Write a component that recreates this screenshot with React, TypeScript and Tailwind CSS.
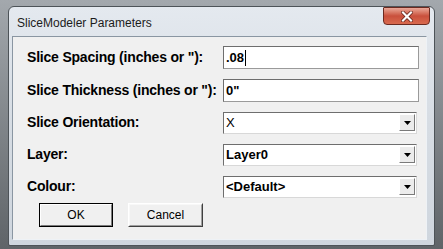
import React from 'react';

const labelCls = "w-[210px] pl-[14px] text-[14px] font-bold tracking-[-0.2px] text-black whitespace-nowrap";

const TextBox: React.FC<{ value: string; caret?: boolean }> = ({ value, caret }) => (
  <div className="w-[196px] h-[23px] bg-white border border-t-[#6e6e6e] border-l-[#6e6e6e] border-r-[#9a9a9a] border-b-[#9a9a9a] flex items-center pl-[2px]">
    <span className="text-[13px] font-bold text-black leading-none">{value}</span>
    {caret && <span className="ml-[1px] w-px h-[16px] bg-black" />}
  </div>
);

const Select: React.FC<{ value: string; bold?: boolean }> = ({ value, bold = true }) => (
  <div className="w-[194px] h-[22px] bg-white border border-t-[#6e6e6e] border-l-[#6e6e6e] border-r-[#d8d8d8] border-b-[#d8d8d8] flex items-center pl-[2px] pr-[1px]">
    <span className={`flex-1 text-[13px] text-black leading-none ${bold ? 'font-bold' : 'font-normal'}`}>{value}</span>
    <div className="w-[16px] h-[17px] bg-[#ececec] border border-t-white border-l-white border-r-[#7a7a7a] border-b-[#7a7a7a] flex items-center justify-center">
      <svg width="7" height="4" viewBox="0 0 7 4"><path d="M0 0h7L3.5 4z" fill="#000" /></svg>
    </div>
  </div>
);

export default function App() {
  return (
    <div className="w-[443px] h-[249px] bg-gradient-to-b from-[#a3a8ad] to-[#5f6468] pl-[8px] pt-[6px] overflow-hidden" style={{ fontFamily: '"Liberation Sans", Arial, sans-serif' }}>
      <div className="w-[427px] h-[240px] rounded-t-[6px] rounded-b-[2px] border border-[#4d5358] bg-gradient-to-b from-[#e4e9ef] via-[#d6dce3] to-[#cfd6de] flex flex-col">
        <div className="h-[29px] flex items-start justify-between pl-[8px] pr-[4px]">
          <span className="mt-[7px] text-[12px] text-[#1b1b1b]">SliceModeler Parameters</span>
          <div className="w-[47px] h-[18px] rounded-b-[4px] rounded-t-[1px] border border-[#6b2a20] bg-gradient-to-b from-[#e9a898] via-[#c9503c] to-[#d96a4f] flex items-center justify-center">
            <svg width="12" height="11" viewBox="0 0 12 11">
              <path d="M2 1.5l8 8M10 1.5l-8 8" stroke="#5a1a10" strokeWidth="3.6" strokeLinecap="square" />
              <path d="M2 1.5l8 8M10 1.5l-8 8" stroke="#ffffff" strokeWidth="2.2" strokeLinecap="square" />
            </svg>
          </div>
        </div>
        <div className="ml-[3px] mr-[7px] h-[204px] bg-[#f0f0f0] border border-t-[#8a96a2] border-l-[#8a96a2] border-r-[#eef2f6] border-b-[#eef2f6] flex flex-col">
          <div className="mt-[9px] h-[23px] flex items-center">
            <span className={labelCls}>Slice Spacing (inches or "):</span>
            <TextBox value=".08" caret />
          </div>
          <div className="mt-[9px] h-[24px] flex items-center">
            <span className={labelCls}>Slice Thickness (inches or "):</span>
            <TextBox value={'0"'} />
          </div>
          <div className="mt-[9px] h-[23px] flex items-center">
            <span className={labelCls}>Slice Orientation:</span>
            <Select value="X" bold={false} />
          </div>
          <div className="mt-[9px] h-[23px] flex items-center">
            <span className={labelCls}>Layer:</span>
            <Select value="Layer0" />
          </div>
          <div className="mt-[9px] h-[23px] flex items-center">
            <span className={labelCls}>Colour:</span>
            <Select value="<Default>" />
          </div>
          <div className="mt-[5px] pl-[26px] flex gap-[15px]">
            <button className="w-[74px] h-[24px] border border-black bg-[#f0f0f0] p-0">
              <div className="w-full h-full border border-t-white border-l-white border-r-[#7a7a7a] border-b-[#7a7a7a] flex items-center justify-center text-[12px] text-black">OK</div>
            </button>
            <button className="w-[75px] h-[24px] border border-t-white border-l-white border-r-[#404040] border-b-[#404040] bg-[#f0f0f0] p-0">
              <div className="w-full h-full border border-t-[#f8f8f8] border-l-[#f8f8f8] border-r-[#a0a0a0] border-b-[#a0a0a0] flex items-center justify-center text-[12px] text-black">Cancel</div>
            </button>
          </div>
        </div>
      </div>
    </div>
  );
}
